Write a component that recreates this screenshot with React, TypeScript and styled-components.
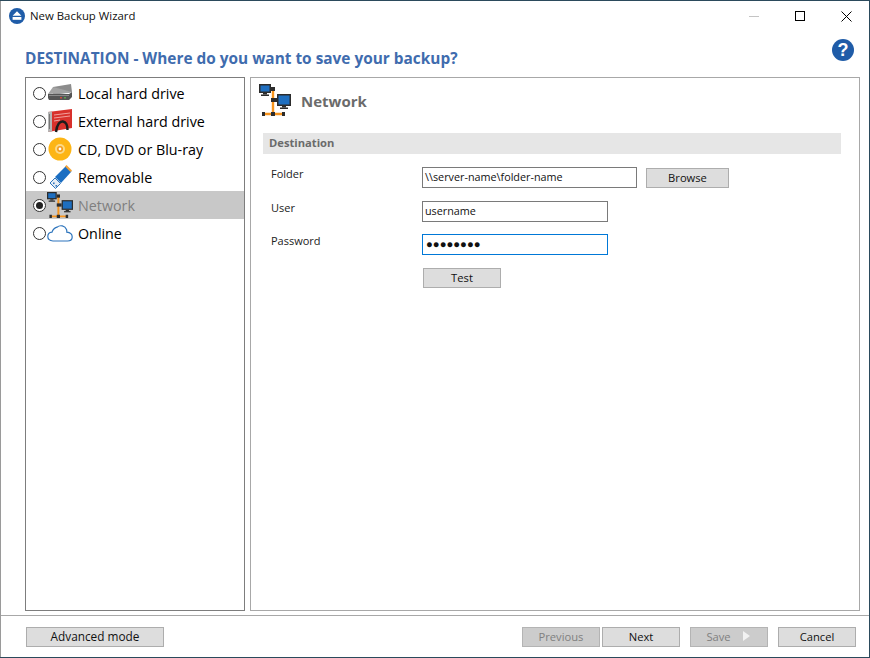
import React from "react";
import styled, { createGlobalStyle } from "styled-components";

const GlobalStyle = createGlobalStyle`
  html, body {
    margin: 0;
    padding: 0;
    height: 658px;
    overflow: hidden;
    background: #2b4a5c;
  }
  * {
    box-sizing: border-box;
  }
`;

const Window = styled.div`
  width: 869px;
  height: 656px;
  margin-top: 1px;
  background: #fff;
  border-left: 1px solid #9a9a9a;
  display: flex;
  flex-direction: column;
  font-family: "Open Sans", "Noto Sans", sans-serif;
  color: #000;
`;

const TitleBar = styled.div`
  height: 30px;
  flex: none;
  display: flex;
  align-items: center;
  padding-left: 8px;
`;

const TitleText = styled.span`
  margin: 0 0 2px 5px;
  font-size: 11.4px;
  color: #111;
`;

const WindowControls = styled.div`
  margin-left: auto;
  display: flex;
  height: 30px;
`;

const ControlButton = styled.div`
  width: 46px;
  height: 30px;
  display: flex;
  align-items: center;
  justify-content: center;
`;

const Heading = styled.div`
  height: 46px;
  flex: none;
  display: flex;
  align-items: flex-start;
  padding: 0 15px 0 24px;
`;

const HeadingText = styled.h1`
  margin: 16px 0 0;
  font-size: 15.4px;
  line-height: 24px;
  font-weight: 700;
  color: #3f6cae;
`;

const HelpButton = styled.div`
  margin-left: auto;
  margin-top: 8px;
  width: 22px;
  height: 22px;
  border-radius: 50%;
  background: #1f5ca8;
  color: #fff;
  font: 700 18px/22px "Liberation Sans", sans-serif;
  text-align: center;
`;

const Body = styled.div`
  height: 534px;
  flex: none;
  display: flex;
  gap: 5px;
  padding-left: 24px;
`;

const List = styled.div`
  width: 220px;
  height: 534px;
  border: 1px solid #7d7d7d;
  padding-top: 1px;
`;

const Row = styled.div<{ $selected?: boolean }>`
  height: 28px;
  display: flex;
  align-items: center;
  padding-left: 7px;
  background: ${(p) => (p.$selected ? "#c8c8c8" : "transparent")};
  color: ${(p) => (p.$selected ? "#7f7f7f" : "#000")};
  font-size: 14.3px;
`;

const Radio = styled.span<{ $checked?: boolean }>`
  width: 13px;
  height: 13px;
  flex: none;
  border-radius: 50%;
  border: 1px solid #333;
  background: #fff;
  display: flex;
  align-items: center;
  justify-content: center;
  &::after {
    content: "";
    display: ${(p) => (p.$checked ? "block" : "none")};
    width: 7px;
    height: 7px;
    border-radius: 50%;
    background: #222;
  }
`;

const RowIcon = styled.span`
  width: 26px;
  height: 26px;
  flex: none;
  margin-left: 1px;
  display: flex;
  align-items: center;
  justify-content: center;
`;

const RowLabel = styled.span`
  margin-left: 5px;
`;

const Panel = styled.div`
  width: 610px;
  height: 534px;
  border: 1px solid #a8a8a8;
  padding: 3px 18px 0 8px;
`;

const PanelHeader = styled.div`
  height: 38px;
  display: flex;
  align-items: center;
`;

const PanelTitle = styled.div`
  margin: 1px 0 0 10px;
  font-size: 15px;
  font-weight: 700;
  color: #6b6b6b;
`;

const Section = styled.div`
  margin: 14px 0 13px 4px;
  height: 21px;
  background: #e6e6e6;
  padding-left: 6px;
  font-size: 11.2px;
  font-weight: 700;
  line-height: 20px;
  color: #6b6b6b;
`;

const Form = styled.div`
  display: grid;
  grid-template-columns: 151px 1fr;
  grid-template-rows: 21px 20px 21px 20px;
  row-gap: 13px;
  padding-left: 12px;
`;

const FieldLabel = styled.div`
  font-size: 11px;
  line-height: 14px;
  color: #222;
`;

const FieldRow = styled.div`
  display: flex;
  align-items: flex-start;
  gap: 9px;
  height: 21px;
`;

const Field = styled.div<{ $width: number; $focused?: boolean }>`
  width: ${(p) => p.$width}px;
  height: 21px;
  border: 1px solid ${(p) => (p.$focused ? "#0078d7" : "#7a7a7a")};
  background: #fff;
  padding-left: 2px;
  font-size: 10.8px;
  line-height: 18px;
  color: #111;
`;

const Dots = styled.span`
  font: 700 11.3px/19px "Liberation Sans", sans-serif;
  margin-left: 1px;
`;

const Button = styled.div<{ $width?: number; $disabled?: boolean }>`
  width: ${(p) => p.$width ?? 78}px;
  height: 20px;
  flex: none;
  display: flex;
  align-items: center;
  justify-content: center;
  gap: 10px;
  padding-bottom: 2px;
  border: 1px solid ${(p) => (p.$disabled ? "#b4b4b4" : "#adadad")};
  background: ${(p) => (p.$disabled ? "#cccccc" : "#dddddd")};
  color: ${(p) => (p.$disabled ? "#808080" : "#111")};
  font-size: 11.2px;
`;

const AdvancedButton = styled(Button)`
  font-size: 11.8px;
`;

const BrowseButton = styled(Button)`
  margin-top: 1px;
`;

const TestRow = styled.div`
  grid-column: 2;
  margin-left: 1px;
`;

const Footer = styled.div`
  margin-top: 4px;
  flex: 1;
  border-top: 1px solid #a8a8a8;
  display: flex;
  align-items: flex-start;
  padding: 11px 13px 0 25px;
`;

const FooterRight = styled.div`
  margin-left: auto;
  display: flex;
`;

const Spaced = styled.div<{ $left: number }>`
  margin-left: ${(p) => p.$left}px;
`;

const SaveArrow = styled.svg`
  margin: 0 2px;
`;

const AppIcon = () => (
  <svg width="16" height="16" viewBox="0 0 16 16">
    <circle cx="8" cy="8" r="8" fill="#1f5ca8" />
    <path d="M8 3.200 12.400 7.800H3.600z" fill="#fff" />
    <rect x="3.600" y="9" width="8.800" height="2.800" fill="#fff" />
  </svg>
);

const HardDriveIcon = () => (
  <svg width="26" height="20" viewBox="0 0 26 20">
    <path d="M6 4 24 1l1 8-19 3z" fill="#8c8c8c" />
    <path d="M1 11 6 4l19 5-3 1z" fill="#a3a3a3" />
    <path d="M1 11h21l3-2v5l-3 3H2l-1-2z" fill="#555" />
    <rect x="2" y="12" width="20" height="1" fill="#8a8a8a" />
    <rect x="13" y="14" width="2" height="1.500" fill="#c94a3a" />
    <rect x="17" y="14" width="2" height="1.500" fill="#5ba04f" />
  </svg>
);

const ExternalDriveIcon = () => (
  <svg width="26" height="26" viewBox="0 0 26 26">
    <path d="M1 4 25 1v19L1 24z" fill="#d8312c" />
    <path d="M1 4l4-.5v20L1 24z" fill="#b5b5b5" />
    <path d="M2.500 6v15" stroke="#777" strokeWidth="1" />
    <path d="M7 7 23 5M7 10l16-2M7 13l6-1" stroke="#f2a09c" strokeWidth="1" />
    <path d="M9 24c1-8 4-11 7-10.500 3 .5 4.500 4 4.500 8.500" fill="none" stroke="#1c1c1c" strokeWidth="2.400" />
  </svg>
);

const DiscIcon = () => (
  <svg width="24" height="24" viewBox="0 0 24 24">
    <circle cx="12" cy="12" r="11.500" fill="#fdb515" />
    <circle cx="12" cy="12" r="5" fill="#fbd987" />
    <circle cx="12" cy="12" r="3" fill="#f59a16" />
    <circle cx="12" cy="12" r="1.400" fill="#fff" />
  </svg>
);

const UsbIcon = () => (
  <svg width="26" height="26" viewBox="0 0 26 26">
    <path d="M8 13 19 2l5.500 5.500L14 19z" fill="#1b6ec2" />
    <path d="M18 2.500 19.500 1 25 6.500 23.500 8z" fill="#f2a33a" />
    <path d="M3 19l5-5 5.500 5.500-5 5z" fill="#e6edf5" stroke="#2e75bd" strokeWidth="1" />
    <rect x="6" y="18.500" width="1.600" height="1.600" fill="#2e75bd" />
    <rect x="8.500" y="21" width="1.600" height="1.600" fill="#2e75bd" />
  </svg>
);

const NetworkIcon = ({ size }: { size: number }) => (
  <svg width={size} height={size} viewBox="0 0 32 32">
    <path d="M14 5v25M4 30h21" stroke="#f7941d" strokeWidth="2.400" fill="none" />
    <rect x="0" y="0" width="12" height="9" fill="#2c2c2c" />
    <rect x="1.500" y="1.500" width="9" height="6" fill="#1f6fc0" />
    <rect x="4" y="9" width="4" height="1.500" fill="#2c2c2c" />
    <rect x="2" y="10.500" width="8" height="1.500" fill="#2c2c2c" />
    <rect x="12" y="3" width="4" height="4" fill="#2c2c2c" />
    <rect x="12" y="14" width="6" height="4" fill="#2c2c2c" />
    <rect x="12" y="28" width="4" height="4" fill="#2c2c2c" />
    <rect x="18" y="10" width="14" height="12" fill="#2c2c2c" />
    <rect x="19.500" y="11.500" width="11" height="9" fill="#1f6fc0" />
    <rect x="23" y="22" width="4" height="1.500" fill="#2c2c2c" />
    <rect x="21" y="23.500" width="8" height="1.500" fill="#2c2c2c" />
    <rect x="3" y="28" width="3" height="4" fill="#2c2c2c" />
    <rect x="23" y="28" width="3" height="4" fill="#2c2c2c" />
  </svg>
);

const CloudIcon = () => (
  <svg width="26" height="18" viewBox="0 0 26 18">
    <path
      d="M6 17C2.500 17 .8 15 .8 12.500 .8 10 2.600 8.400 5 8.200 5.800 5.500 7.800 3.800 10 3.200 13 .6 18 1.600 19.500 5.500 19.800 6.500 19.900 7.400 19.800 8.200 23 8.600 25.200 10.500 25.200 13 25.200 15.500 23 17 20.500 17z"
      fill="#fff"
      stroke="#2e75bd"
      strokeWidth="1.200"
    />
  </svg>
);

const rows = [
  { label: "Local hard drive", icon: <HardDriveIcon /> },
  { label: "External hard drive", icon: <ExternalDriveIcon /> },
  { label: "CD, DVD or Blu-ray", icon: <DiscIcon /> },
  { label: "Removable", icon: <UsbIcon /> },
  { label: "Network", icon: <NetworkIcon size={26} />, selected: true },
  { label: "Online", icon: <CloudIcon /> },
];

const App = () => {
  return (
    <>
      <GlobalStyle />
      <Window>
        <TitleBar>
          <AppIcon />
          <TitleText>New Backup Wizard</TitleText>
          <WindowControls>
            <ControlButton>
              <svg width="10" height="10" viewBox="0 0 10 10">
                <path d="M0 5.500h10" stroke="#c4c4c4" strokeWidth="1" />
              </svg>
            </ControlButton>
            <ControlButton>
              <svg width="10" height="10" viewBox="0 0 10 10">
                <rect x=".5" y=".5" width="9" height="9" fill="none" stroke="#000" />
              </svg>
            </ControlButton>
            <ControlButton>
              <svg width="11" height="11" viewBox="0 0 11 11">
                <path d="M.5.500l10 10M10.500.500l-10 10" stroke="#000" strokeWidth="1" />
              </svg>
            </ControlButton>
          </WindowControls>
        </TitleBar>
        <Heading>
          <HeadingText>DESTINATION - Where do you want to save your backup?</HeadingText>
          <HelpButton>?</HelpButton>
        </Heading>
        <Body>
          <List>
            {rows.map((row) => (
              <Row key={row.label} $selected={row.selected}>
                <Radio $checked={row.selected} />
                <RowIcon>{row.icon}</RowIcon>
                <RowLabel>{row.label}</RowLabel>
              </Row>
            ))}
          </List>
          <Panel>
            <PanelHeader>
              <NetworkIcon size={32} />
              <PanelTitle>Network</PanelTitle>
            </PanelHeader>
            <Section>Destination</Section>
            <Form>
              <FieldLabel>Folder</FieldLabel>
              <FieldRow>
                <Field $width={215}>\\server-name\folder-name</Field>
                <BrowseButton $width={83}>Browse</BrowseButton>
              </FieldRow>
              <FieldLabel>User</FieldLabel>
              <FieldRow>
                <Field $width={186}>username</Field>
              </FieldRow>
              <FieldLabel>Password</FieldLabel>
              <FieldRow>
                <Field $width={186} $focused>
                  <Dots>●●●●●●●●</Dots>
                </Field>
              </FieldRow>
              <TestRow>
                <Button>Test</Button>
              </TestRow>
            </Form>
          </Panel>
        </Body>
        <Footer>
          <AdvancedButton $width={138}>Advanced mode</AdvancedButton>
          <FooterRight>
            <Button $disabled>Previous</Button>
            <Spaced $left={2}>
              <Button>Next</Button>
            </Spaced>
            <Spaced $left={10}>
              <Button $disabled>
                Save
                <SaveArrow width="7" height="10" viewBox="0 0 7 10">
                  <path d="M0 0l7 5-7 5z" fill="#f2f2f2" />
                </SaveArrow>
              </Button>
            </Spaced>
            <Spaced $left={10}>
              <Button>Cancel</Button>
            </Spaced>
          </FooterRight>
        </Footer>
      </Window>
    </>
  );
};

export default App;
